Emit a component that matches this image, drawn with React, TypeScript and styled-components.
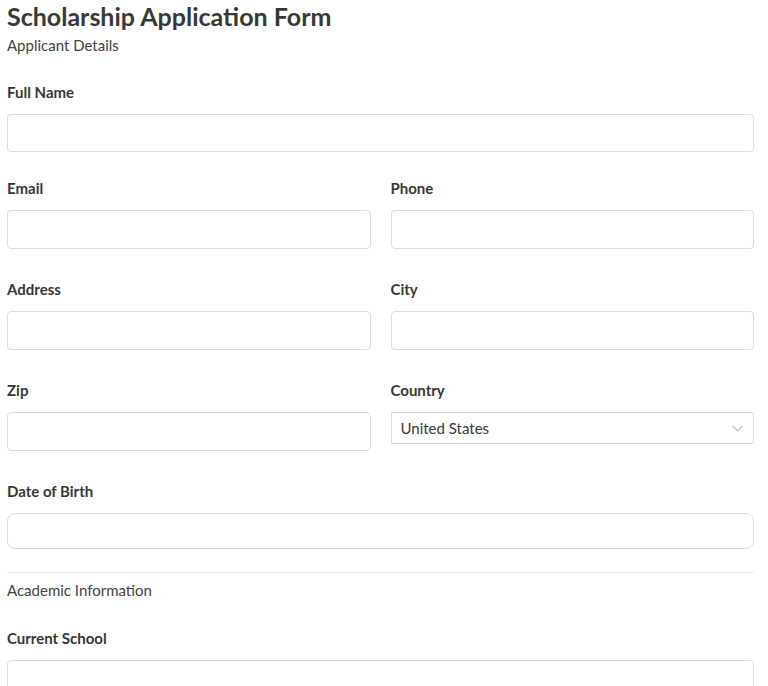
import React from "react";
import styled, { createGlobalStyle } from "styled-components";

const GlobalStyle = createGlobalStyle`
  html, body { margin: 0; padding: 0; background: #ffffff; }
  body { font-family: "Lato", "Open Sans", sans-serif; color: #3b3b3b; }
  * { box-sizing: border-box; }
`;

const Page = styled.form`
  width: 747px;
  margin-left: 7px;
  display: flex;
  flex-direction: column;
`;

const Title = styled.h1`
  margin: 0;
  padding-top: 1px;
  font-size: 25px;
  line-height: 30px;
  font-weight: 700;
  color: #383838;
`;

const SectionTitle = styled.div<{ $top?: number; $bottom?: number }>`
  font-size: 15px;
  line-height: 20px;
  color: #444444;
  margin-top: ${(p) => p.$top ?? 0}px;
  margin-bottom: ${(p) => p.$bottom ?? 0}px;
`;

const Row = styled.div<{ $cols: number; $after: number }>`
  display: grid;
  grid-template-columns: repeat(${(p) => p.$cols}, 1fr);
  column-gap: 20px;
  margin-bottom: ${(p) => p.$after}px;
`;

const Field = styled.div`
  display: flex;
  flex-direction: column;
`;

const Label = styled.label`
  font-size: 15px;
  line-height: 20px;
  font-weight: 700;
  color: #383838;
  margin-bottom: 12px;
`;

const TextInput = styled.input<{ $h?: number; $r?: number }>`
  height: ${(p) => p.$h ?? 38}px;
  width: 100%;
  border: 1px solid #d6dde8;
  border-radius: ${(p) => p.$r ?? 4}px;
  background: #fff;
  padding: 0 12px;
  font-family: inherit;
  font-size: 14px;
  outline: none;
`;

const SelectBox = styled.div`
  height: 32px;
  border: 1px solid #d6dde8;
  border-radius: 1px;
  display: flex;
  align-items: center;
  justify-content: space-between;
  padding: 0 10px 0 9px;
  font-size: 15px;
  color: #3a3a3a;
`;

const Divider = styled.hr`
  border: 0;
  border-top: 1px solid #ececec;
  margin: 0;
  width: 100%;
`;

const Chevron = () => (
  <svg width="11" height="7" viewBox="0 0 11 7" fill="none">
    <path d="M0.5 0.8 L5.5 5.8 L10.5 0.8" stroke="#b8bcc4" strokeWidth="1.1" />
  </svg>
);

export default function App() {
  return (
    <>
      <GlobalStyle />
      <Page>
        <Title>Scholarship Application Form</Title>
        <SectionTitle $top={4} $bottom={27}>Applicant Details</SectionTitle>

        <Row $cols={1} $after={26}>
          <Field>
            <Label>Full Name</Label>
            <TextInput />
          </Field>
        </Row>

        <Row $cols={2} $after={30}>
          <Field>
            <Label>Email</Label>
            <TextInput $h={39} />
          </Field>
          <Field>
            <Label>Phone</Label>
            <TextInput $h={39} />
          </Field>
        </Row>

        <Row $cols={2} $after={30}>
          <Field>
            <Label>Address</Label>
            <TextInput $h={39} />
          </Field>
          <Field>
            <Label>City</Label>
            <TextInput $h={39} />
          </Field>
        </Row>

        <Row $cols={2} $after={30}>
          <Field>
            <Label>Zip</Label>
            <TextInput $h={39} />
          </Field>
          <Field>
            <Label>Country</Label>
            <SelectBox>
              <span>United States</span>
              <Chevron />
            </SelectBox>
          </Field>
        </Row>

        <Row $cols={1} $after={23}>
          <Field>
            <Label>Date of Birth</Label>
            <TextInput $h={36} $r={8} />
          </Field>
        </Row>

        <Divider />
        <SectionTitle $top={7} $bottom={28}>Academic Information</SectionTitle>

        <Row $cols={1} $after={30}>
          <Field>
            <Label>Current School</Label>
            <TextInput $h={39} />
          </Field>
        </Row>
      </Page>
    </>
  );
}
